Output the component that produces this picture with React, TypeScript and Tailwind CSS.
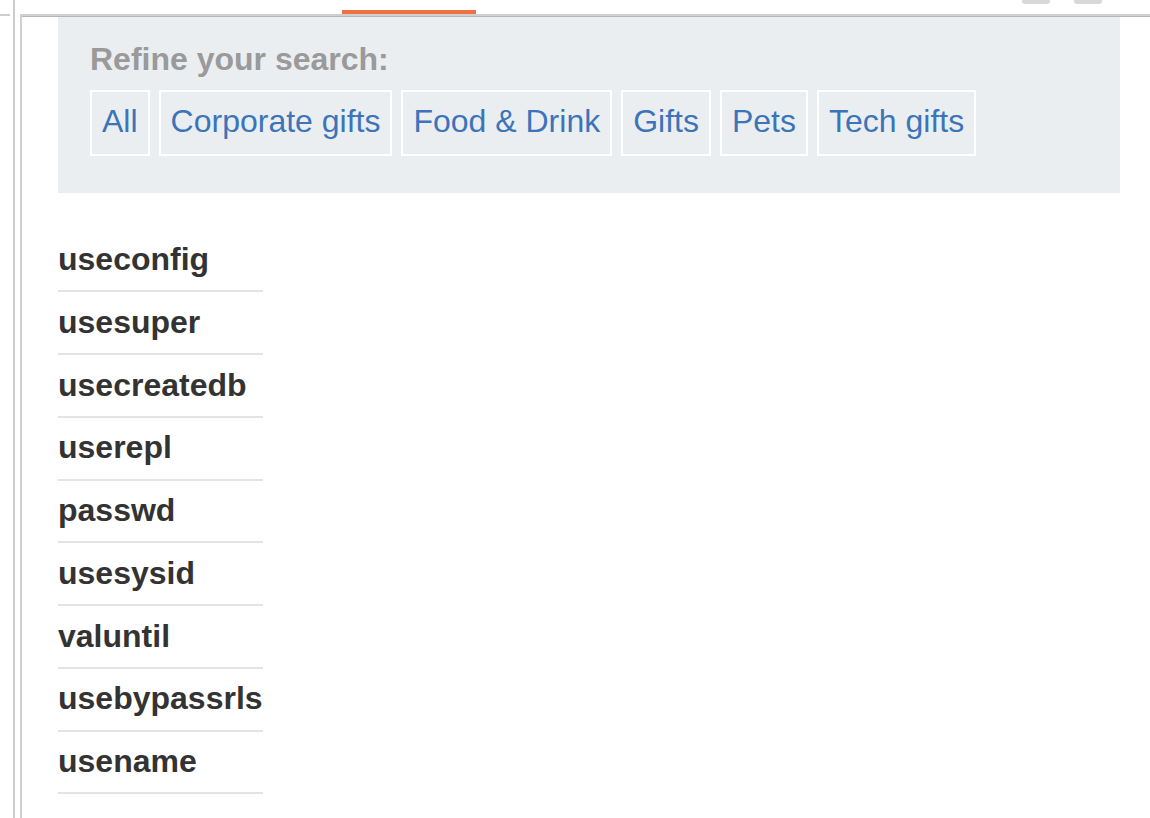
export default function App() {
  const cats = ["All", "Corporate gifts", "Food & Drink", "Gifts", "Pets", "Tech gifts"];
  const items = [
    "useconfig",
    "usesuper",
    "usecreatedb",
    "userepl",
    "passwd",
    "usesysid",
    "valuntil",
    "usebypassrls",
    "usename",
  ];
  return (
    <div className="w-[1150px] h-[818px] bg-white overflow-hidden flex font-['Liberation_Sans',Arial,sans-serif]">
      {/* left gutter */}
      <div className="w-[20px] flex shrink-0">
        <div className="w-[13px] pt-[14px]">
          <div className="w-[10px] h-[2px] bg-[#cfcfcf]" />
        </div>
        <div className="w-[2px] h-full bg-[#cbcbcb]" />
      </div>
      {/* main column */}
      <div className="flex-1 flex flex-col min-w-0">
        {/* tab strip */}
        <div className="h-[14px] flex shrink-0">
          <div className="ml-[322px] w-[134px] self-end h-[4px] bg-[#ee7142]" />
          <div className="ml-auto flex gap-[24px] self-start mr-[48px]">
            <div className="w-[28px] h-[4px] bg-[#d8d8d8] rounded-b-[3px]" />
            <div className="w-[28px] h-[4px] bg-[#d8d8d8] rounded-b-[3px]" />
          </div>
        </div>
        {/* content box */}
        <div className="flex-1 border-t-2 border-l-2 border-[#d0d0d0] flex flex-col">
          <div className="flex-1 border-t border-[#b6b6b6] pl-[36px] pr-[30px]">
            <div className="bg-[#ebeef1] h-[176px] px-[32px] pt-[24px]">
              <div className="text-[32px] leading-[37px] font-bold text-[#9a9a9a]">
                Refine your search:
              </div>
              <div className="flex gap-[9px] mt-[12px]">
                {cats.map((c) => (
                  <div
                    key={c}
                    className="h-[66px] border-2 border-white px-[10px] pb-[5px] flex items-center text-[32px] text-[#3c74b9] whitespace-nowrap"
                  >
                    {c}
                  </div>
                ))}
              </div>
            </div>
            <div className="mt-[36.5px] w-fit">
              {items.map((it) => (
                <div
                  key={it}
                  className="h-[62.75px] box-border border-b-2 border-[#e4e4e4] pt-[5.5px] text-[32px] leading-[48px] font-bold text-[#333] whitespace-nowrap"
                >
                  {it}
                </div>
              ))}
            </div>
          </div>
        </div>
      </div>
    </div>
  );
}
